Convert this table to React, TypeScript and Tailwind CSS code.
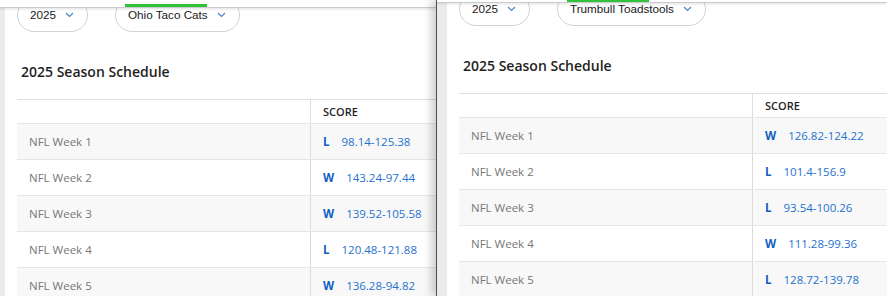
import React from "react";

type Game = { r: "W" | "L"; s: string };

const leftGames: Game[] = [
  { r: "L", s: "98.14-125.38" },
  { r: "W", s: "143.24-97.44" },
  { r: "W", s: "139.52-105.58" },
  { r: "L", s: "120.48-121.88" },
  { r: "W", s: "136.28-94.82" },
];

const rightGames: Game[] = [
  { r: "W", s: "126.82-124.22" },
  { r: "L", s: "101.4-156.9" },
  { r: "L", s: "93.54-100.26" },
  { r: "W", s: "111.28-99.36" },
  { r: "L", s: "128.72-139.78" },
];

function Chevron() {
  return (
    <svg width="9" height="6" viewBox="0 0 9 6" className="shrink-0">
      <path d="M1 1 L4.5 4.5 L8 1" fill="none" stroke="#4a86c8" strokeWidth="1.2" />
    </svg>
  );
}

function Pill({ label }: { label: string }) {
  return (
    <div className="flex h-[34px] items-center gap-[9px] rounded-full border border-[#d2d2d2] bg-white pl-3 pr-[13px] font-['Liberation_Sans',Arial,sans-serif] text-[11.7px] text-[#1a1a1a]">
      <span>{label}</span>
      <Chevron />
    </div>
  );
}

function Window({
  team,
  games,
  top,
  headerH,
  greenTop,
  greenH,
}: {
  team: string;
  games: Game[];
  top: string;
  headerH: string;
  greenTop: string;
  greenH: string;
}) {
  return (
    <div className="relative flex h-full w-full">
      <div className={`absolute left-0 right-0 top-0 z-10 border-b border-[#cbcbcb] bg-white shadow-[0_1px_3px_rgba(0,0,0,0.12)] ${headerH}`}>
        <div className={`absolute left-[130px] w-[82px] bg-[#2fc23a] ${greenTop} ${greenH}`} />
      </div>
      <div className="w-[10px] shrink-0 bg-[#eaebed]" />
      <div className={`flex min-w-0 flex-1 flex-col bg-white pl-3 ${top}`}>
        <div className="flex items-center gap-[27px]">
          <Pill label="2025" />
          <Pill label={team} />
        </div>
        <h2 className="mt-[30px] pl-1 font-['Open_Sans',sans-serif] text-[14px] font-semibold leading-[20px] text-[#1f1f1f]">
          2025 Season Schedule
        </h2>
        <div className="mt-[17px] font-['Open_Sans',sans-serif]">
          <div className="flex h-[24px] border-t border-[#dedede] bg-white">
            <div className="w-[294px] shrink-0 border-r border-[#dedede]" />
            <div className="flex items-center pl-3 pt-[2px] text-[11px] font-semibold text-[#1f1f1f]">SCORE</div>
          </div>
          {games.map((g, i) => (
            <div
              key={i}
              className={`flex h-[36px] border-t border-[#e6e6e6] ${i % 2 === 0 ? "bg-[#f8f8f8]" : "bg-white"}`}
            >
              <div className="flex w-[294px] shrink-0 items-center border-r border-[#dcdcdc] pl-3 text-[11.5px] text-[#767676]">
                NFL Week {i + 1}
              </div>
              <div className="flex items-center pl-3 text-[11.5px] text-[#1f72cf]">
                <span className="mr-3 font-bold text-[#0f5fc0]">{g.r}</span>
                <span>{g.s}</span>
              </div>
            </div>
          ))}
        </div>
      </div>
    </div>
  );
}

export default function App() {
  return (
    <div className="flex h-[296px] w-[887px] overflow-hidden bg-white">
      <div className="relative ml-[-5px] h-full w-[441px] shrink-0 overflow-hidden">
        <Window
          team="Ohio Taco Cats"
          games={leftGames}
          top="mt-[-2px]"
          headerH="h-[8px]"
          greenTop="top-[4px]"
          greenH="h-[3px]"
        />
      </div>
      <div className="relative z-20 h-full flex-1 overflow-hidden border-l border-[#4d4d4d] shadow-[-5px_0_8px_rgba(0,0,0,0.18)]">
        <Window
          team="Trumbull Toadstools"
          games={rightGames}
          top="mt-[-8px]"
          headerH="h-[3px]"
          greenTop="top-0"
          greenH="h-[2px]"
        />
      </div>
    </div>
  );
}
